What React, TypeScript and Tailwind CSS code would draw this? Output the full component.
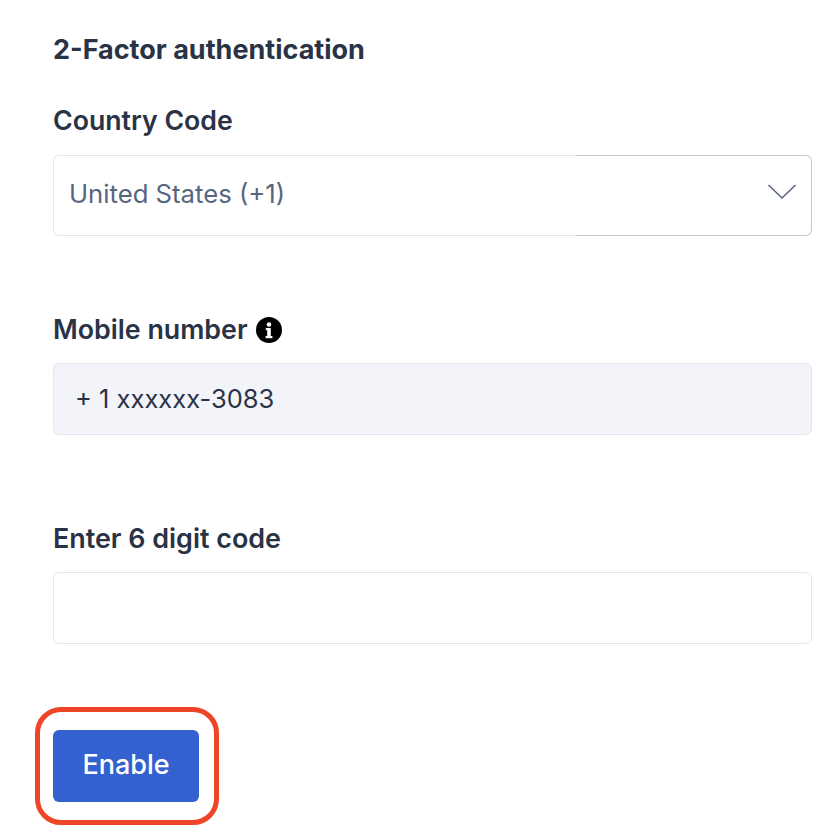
const font = "font-['Inter',sans-serif]";

export default function App() {
  return (
    <div className={`w-[840px] h-[840px] overflow-hidden bg-white pl-[53px] pr-7 pt-[32px] text-[#2a3346] ${font}`}>
      <h2 className="text-[27px] leading-9 font-bold">2-Factor authentication</h2>

      <label className="block mt-[34px] text-[26.7px] leading-9 font-semibold">Country Code</label>
      <div className="mt-[17px] flex h-[81px]">
        <div className="w-[523px] flex items-center pl-[15px] pb-[2px] border border-r-0 border-[#e2e4ee] rounded-l-[6px] text-[25.7px] text-[#57657f]">
          United States (+1)
        </div>
        <div className="flex-1 flex items-center justify-end pr-[14px] pb-[8px] border border-l-0 border-[#c3c9d5] rounded-r-[6px]">
          <svg width="30" height="18" viewBox="0 0 30 18" fill="none">
            <path d="M1.5 2L15 15L28.5 2" stroke="#57657f" strokeWidth="1.5" />
          </svg>
        </div>
      </div>

      <div className="mt-[76px] flex items-center gap-[8px] h-9">
        <label className="pb-[2px] text-[26.8px] leading-9 font-semibold">Mobile number</label>
        <svg width="26" height="26" viewBox="0 0 26 26">
          <circle cx="13" cy="13" r="13" fill="#000" />
          <circle cx="13" cy="7.5" r="2.3" fill="#fff" />
          <path d="M9.8 11h5v8h1.6v2.2H9.6V19h1.6v-5.8H9.8z" fill="#fff" />
        </svg>
      </div>
      <div className="mt-[15px] h-[72px] flex items-center pl-[21px] bg-[#f3f4f9] border border-[#e2e4ee] rounded-[6px] text-[25.5px] text-[#2a3346]">
        + 1 xxxxxx-3083
      </div>

      <label className="block mt-[85px] text-[26.9px] leading-9 font-semibold">Enter 6 digit code</label>
      <div className="mt-[16px] h-[72px] bg-white border border-[#e2e4ee] rounded-[6px]" />

      <div className="relative mt-[86px] w-[146px] h-[72px]">
        <button type="button" className="w-full h-full pb-[1px] bg-[#3361d0] rounded-[6px] text-white text-[27px] font-medium">
          Enable
        </button>
        {/* red annotation round the button */}
        <div className="absolute -left-[18px] -top-[23px] w-[184px] h-[118px] border-[5px] border-[#ee4528] rounded-[26px]" />
      </div>
    </div>
  );
}
